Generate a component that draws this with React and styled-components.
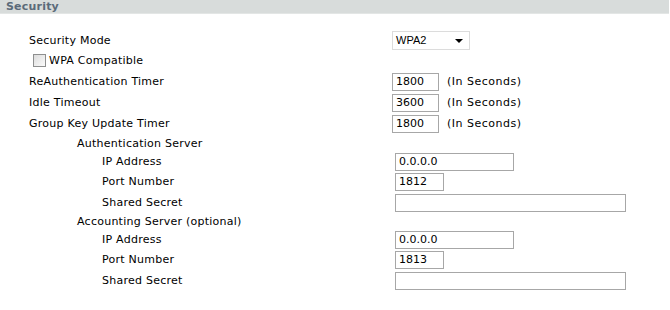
import React from "react";
import styled, { createGlobalStyle } from "styled-components";

const Global = createGlobalStyle`
  html, body { margin: 0; padding: 0; background: #fff; }
  body { font-family: "DejaVu Sans", Verdana, sans-serif; font-size: 11px; color: #000; }
`;

const Page = styled.div`
  width: 670px;
  height: 310px;
  background: #fff;
`;

const Header = styled.div`
  height: 13px;
  margin-right: 1px;
  background: #d8dcdb;
  border-bottom: 1px solid #e3e6e5;
  padding-left: 6px;
  font-weight: bold;
  font-size: 11px;
  line-height: 13px;
  letter-spacing: 0.2px;
  color: #5b6a79;
`;

const Form = styled.div`
  padding-top: 16px;
  display: flex;
  flex-direction: column;
`;

const Row = styled.div`
  height: ${(p) => p.$h || 21}px;
  display: grid;
  grid-template-columns: ${(p) => p.$labelW}px 1fr;
  align-items: center;
`;

const Label = styled.div`
  padding-left: ${(p) => p.$indent}px;
  white-space: nowrap;
  display: flex;
  align-items: center;
  gap: 3px;
  letter-spacing: 0.25px;
`;

const Controls = styled.div`
  display: flex;
  align-items: center;
  gap: 8px;
`;

const TextBox = styled.div`
  box-sizing: border-box;
  width: ${(p) => p.$w}px;
  height: 18px;
  border: 1px solid #a7a7a7;
  background: #fff;
  padding: 0 3px;
  line-height: 16px;
  font-size: 11px;
`;

const Select = styled.div`
  box-sizing: border-box;
  width: 78px;
  height: 19px;
  border: 1px solid #dcdcdc;
  background: #fff;
  display: flex;
  align-items: center;
  justify-content: space-between;
  padding: 0 6px 0 3px;
  font-family: "Liberation Sans", Arial, sans-serif;
  font-size: 11px;
`;

const Arrow = styled.span`
  width: 0;
  height: 0;
  border-left: 4px solid transparent;
  border-right: 4px solid transparent;
  border-top: 4px solid #000;
  margin-top: 1px;
`;

const Check = styled.span`
  box-sizing: border-box;
  width: 13px;
  height: 13px;
  border: 1px solid #8e8f8f;
  background: linear-gradient(135deg, #dcdcdc, #fbfbfb);
  margin-left: 4px;
`;

const Unit = styled.span`
  white-space: nowrap;
  letter-spacing: 0.5px;
`;

export default function App() {
  return (
    <Page>
      <Global />
      <Header>Security</Header>
      <Form>
        <Row $h={20} $labelW={392}>
          <Label $indent={29}>Security Mode</Label>
          <Controls>
            <Select>
              WPA2
              <Arrow />
            </Select>
          </Controls>
        </Row>
        <Row $h={21} $labelW={392}>
          <Label $indent={29}>
            <Check />
            WPA Compatible
          </Label>
        </Row>
        {[
          ["ReAuthentication Timer", "1800"],
          ["Idle Timeout", "3600"],
          ["Group Key Update Timer", "1800"],
        ].map(([l, v]) => (
          <Row key={l} $labelW={392}>
            <Label $indent={29}>{l}</Label>
            <Controls>
              <TextBox $w={47}>{v}</TextBox>
              <Unit>(In Seconds)</Unit>
            </Controls>
          </Row>
        ))}
        {[
          ["Authentication Server", "0.0.0.0", "1812", 18, 19],
          ["Accounting Server (optional)", "0.0.0.0", "1813", 17, 19],
        ].map(([title, ip, port, th, ih]) => (
          <React.Fragment key={title}>
            <Row $h={th} $labelW={395}>
              <Label $indent={77}>{title}</Label>
            </Row>
            <Row $h={ih} $labelW={395}>
              <Label $indent={102}>IP Address</Label>
              <Controls>
                <TextBox $w={119}>{ip}</TextBox>
              </Controls>
            </Row>
            <Row $labelW={395}>
              <Label $indent={102}>Port Number</Label>
              <Controls>
                <TextBox $w={49}>{port}</TextBox>
              </Controls>
            </Row>
            <Row $labelW={395}>
              <Label $indent={102}>Shared Secret</Label>
              <Controls>
                <TextBox $w={231} />
              </Controls>
            </Row>
          </React.Fragment>
        ))}
      </Form>
    </Page>
  );
}
